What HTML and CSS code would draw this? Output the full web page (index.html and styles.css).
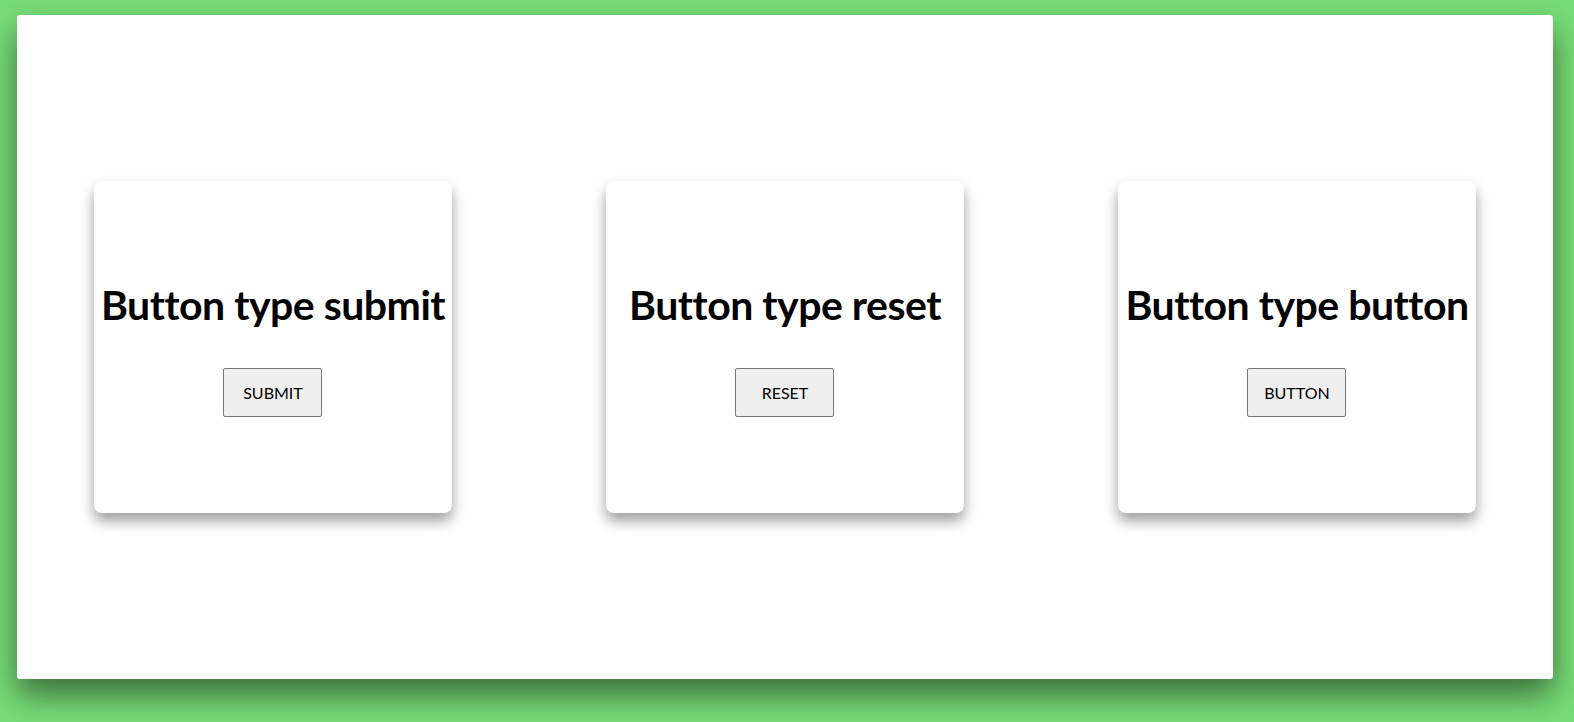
FILE: index.html
```html
<!DOCTYPE html>
<html lang="en">
<head>
<meta charset="utf-8">
<title>Button types</title>
<link rel="stylesheet" href="styles.css">
</head>
<body>
<main class="container">
  <section class="column">
    <div class="card">
      <h1 class="title">Button type submit</h1>
      <button class="btn" type="submit">Submit</button>
    </div>
  </section>
  <section class="column">
    <div class="card">
      <h1 class="title">Button type reset</h1>
      <button class="btn" type="reset">Reset</button>
    </div>
  </section>
  <section class="column">
    <div class="card">
      <h1 class="title">Button type button</h1>
      <button class="btn" type="button">Button</button>
    </div>
  </section>
</main>
</body>
</html>
```
FILE: styles.css
```css
* { box-sizing: border-box; }
html, body { margin: 0; height: 100%; }
body {
  background: #77dd77;
  padding: 15px 21px 43px 17px;
  font-family: "Lato", "Noto Sans", sans-serif;
}
.container {
  height: 664px;
  background: #fff;
  border-radius: 3px;
  box-shadow: 0 16px 32px rgba(0, 0, 0, 0.5);
  display: grid;
  grid-template-columns: repeat(3, 1fr);
}
.column {
  display: flex;
  align-items: center;
  justify-content: center;
}
.card {
  width: 70%;
  height: 50%;
  padding-top: 4px;
  background: #fff;
  border-radius: 8px;
  box-shadow: 0 8px 14px rgba(0, 0, 0, 0.38);
  display: flex;
  flex-direction: column;
  align-items: center;
  justify-content: center;
}
.title {
  margin: 0 0 39px;
  font-size: 41px;
  line-height: 48px;
  font-weight: 700;
  letter-spacing: -0.5px;
  color: #000;
  white-space: nowrap;
}
.btn {
  width: 99px;
  height: 49px;
  background: #efefef;
  border: 1px solid #767676;
  border-radius: 2px;
  font-family: "Lato", "Noto Sans", sans-serif;
  font-size: 16px;
  text-transform: uppercase;
  color: #000;
  padding: 0;
}
```
